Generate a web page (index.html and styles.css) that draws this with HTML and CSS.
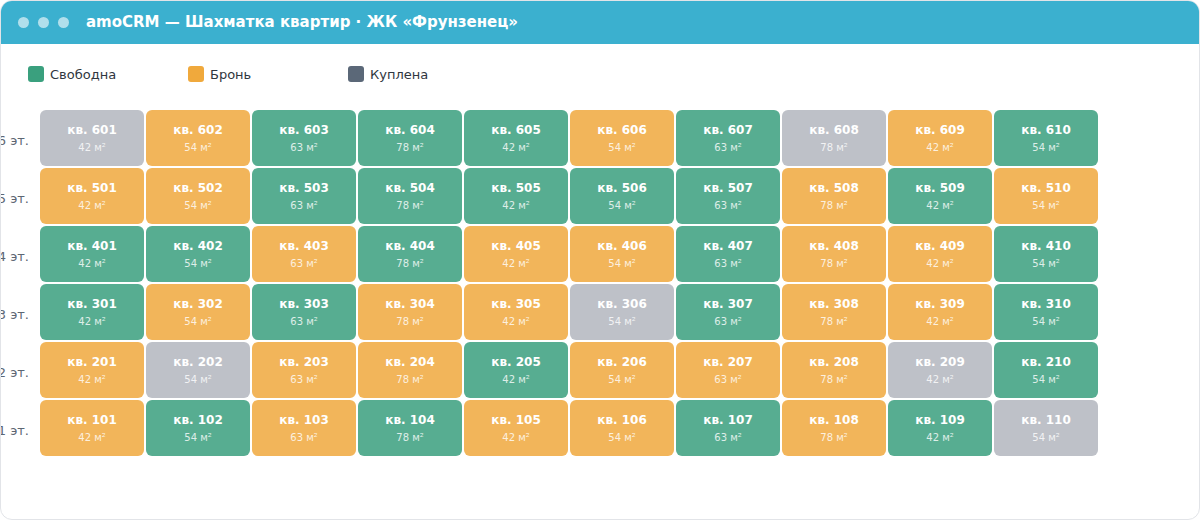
FILE: index.html
```html
<!DOCTYPE html>
<html>
<head>
    <meta charset="utf-8">
    <title>amoCRM — Шахматка квартир</title>
    <link rel="stylesheet" href="styles.css">
</head>
<body>
<div class="window">
    <div class="titlebar">
        <span class="dot"></span><span class="dot"></span><span class="dot"></span>
        <span class="title">amoCRM — Шахматка квартир · ЖК «Фрунзенец»</span>
    </div>

    <div class="legend">
        <div class="legend-item"><span class="swatch free"></span>Свободна</div>
        <div class="legend-item"><span class="swatch booked"></span>Бронь</div>
        <div class="legend-item"><span class="swatch sold"></span>Куплена</div>
    </div>

    <div class="board">
        <div class="floor">
            <div class="floor-label">6 эт.</div>
            <div class="flat sold"><b>кв. 601</b><span>42 м²</span></div>
            <div class="flat booked"><b>кв. 602</b><span>54 м²</span></div>
            <div class="flat free"><b>кв. 603</b><span>63 м²</span></div>
            <div class="flat free"><b>кв. 604</b><span>78 м²</span></div>
            <div class="flat free"><b>кв. 605</b><span>42 м²</span></div>
            <div class="flat booked"><b>кв. 606</b><span>54 м²</span></div>
            <div class="flat free"><b>кв. 607</b><span>63 м²</span></div>
            <div class="flat sold"><b>кв. 608</b><span>78 м²</span></div>
            <div class="flat booked"><b>кв. 609</b><span>42 м²</span></div>
            <div class="flat free"><b>кв. 610</b><span>54 м²</span></div>
        </div>
        <div class="floor">
            <div class="floor-label">5 эт.</div>
            <div class="flat booked"><b>кв. 501</b><span>42 м²</span></div>
            <div class="flat booked"><b>кв. 502</b><span>54 м²</span></div>
            <div class="flat free"><b>кв. 503</b><span>63 м²</span></div>
            <div class="flat free"><b>кв. 504</b><span>78 м²</span></div>
            <div class="flat free"><b>кв. 505</b><span>42 м²</span></div>
            <div class="flat free"><b>кв. 506</b><span>54 м²</span></div>
            <div class="flat free"><b>кв. 507</b><span>63 м²</span></div>
            <div class="flat booked"><b>кв. 508</b><span>78 м²</span></div>
            <div class="flat free"><b>кв. 509</b><span>42 м²</span></div>
            <div class="flat booked"><b>кв. 510</b><span>54 м²</span></div>
        </div>
        <div class="floor">
            <div class="floor-label">4 эт.</div>
            <div class="flat free"><b>кв. 401</b><span>42 м²</span></div>
            <div class="flat free"><b>кв. 402</b><span>54 м²</span></div>
            <div class="flat booked"><b>кв. 403</b><span>63 м²</span></div>
            <div class="flat free"><b>кв. 404</b><span>78 м²</span></div>
            <div class="flat booked"><b>кв. 405</b><span>42 м²</span></div>
            <div class="flat booked"><b>кв. 406</b><span>54 м²</span></div>
            <div class="flat free"><b>кв. 407</b><span>63 м²</span></div>
            <div class="flat booked"><b>кв. 408</b><span>78 м²</span></div>
            <div class="flat booked"><b>кв. 409</b><span>42 м²</span></div>
            <div class="flat free"><b>кв. 410</b><span>54 м²</span></div>
        </div>
        <div class="floor">
            <div class="floor-label">3 эт.</div>
            <div class="flat free"><b>кв. 301</b><span>42 м²</span></div>
            <div class="flat booked"><b>кв. 302</b><span>54 м²</span></div>
            <div class="flat free"><b>кв. 303</b><span>63 м²</span></div>
            <div class="flat booked"><b>кв. 304</b><span>78 м²</span></div>
            <div class="flat booked"><b>кв. 305</b><span>42 м²</span></div>
            <div class="flat sold"><b>кв. 306</b><span>54 м²</span></div>
            <div class="flat free"><b>кв. 307</b><span>63 м²</span></div>
            <div class="flat booked"><b>кв. 308</b><span>78 м²</span></div>
            <div class="flat booked"><b>кв. 309</b><span>42 м²</span></div>
            <div class="flat free"><b>кв. 310</b><span>54 м²</span></div>
        </div>
        <div class="floor">
            <div class="floor-label">2 эт.</div>
            <div class="flat booked"><b>кв. 201</b><span>42 м²</span></div>
            <div class="flat sold"><b>кв. 202</b><span>54 м²</span></div>
            <div class="flat booked"><b>кв. 203</b><span>63 м²</span></div>
            <div class="flat booked"><b>кв. 204</b><span>78 м²</span></div>
            <div class="flat free"><b>кв. 205</b><span>42 м²</span></div>
            <div class="flat booked"><b>кв. 206</b><span>54 м²</span></div>
            <div class="flat booked"><b>кв. 207</b><span>63 м²</span></div>
            <div class="flat booked"><b>кв. 208</b><span>78 м²</span></div>
            <div class="flat sold"><b>кв. 209</b><span>42 м²</span></div>
            <div class="flat free"><b>кв. 210</b><span>54 м²</span></div>
        </div>
        <div class="floor">
            <div class="floor-label">1 эт.</div>
            <div class="flat booked"><b>кв. 101</b><span>42 м²</span></div>
            <div class="flat free"><b>кв. 102</b><span>54 м²</span></div>
            <div class="flat booked"><b>кв. 103</b><span>63 м²</span></div>
            <div class="flat free"><b>кв. 104</b><span>78 м²</span></div>
            <div class="flat booked"><b>кв. 105</b><span>42 м²</span></div>
            <div class="flat booked"><b>кв. 106</b><span>54 м²</span></div>
            <div class="flat free"><b>кв. 107</b><span>63 м²</span></div>
            <div class="flat booked"><b>кв. 108</b><span>78 м²</span></div>
            <div class="flat free"><b>кв. 109</b><span>42 м²</span></div>
            <div class="flat sold"><b>кв. 110</b><span>54 м²</span></div>
        </div>
    </div>
</div>
</body>
</html>
```

FILE: styles.css
```css
body {
    margin: 0;
    background: #fff;
    font-family: 'DejaVu Sans', sans-serif;
}

.window {
    height: 520px;
    box-sizing: border-box;
    border: 1px solid #e2e4e8;
    border-radius: 12px;
    overflow: hidden;
    background: #fff;
}

.titlebar {
    height: 44px;
    background: #3bb0cf;
    display: flex;
    align-items: center;
    padding-left: 18px;
    margin: -1px -1px 0;
}

.dot {
    width: 11px;
    height: 11px;
    border-radius: 50%;
    background: rgba(255, 255, 255, 0.6);
    margin-right: 9px;
}

.title {
    margin-left: 8px;
    color: #fff;
    font-weight: bold;
    font-size: 15px;
}

.legend {
    display: flex;
    padding: 22px 0 0 27px;
    height: 16px;
}

.legend-item {
    width: 160px;
    display: flex;
    align-items: center;
    font-size: 13px;
    color: #2f3640;
}

.swatch {
    width: 16px;
    height: 16px;
    border-radius: 3px;
    margin-right: 6px;
}

.swatch.free { background: #3aa07e; }
.swatch.booked { background: #f0a93c; }
.swatch.sold { background: #5b6878; }

.board {
    padding-top: 28px;
    display: flex;
    flex-direction: column;
    gap: 2px;
}

.floor {
    display: flex;
    gap: 2px;
    height: 56px;
}

.floor-label {
    width: 28px;
    margin-right: 9px;
    padding-top: 4px;
    display: flex;
    align-items: center;
    justify-content: flex-end;
    white-space: nowrap;
    font-size: 13px;
    color: #5d6673;
}

.flat {
    width: 104px;
    border-radius: 6px;
    display: flex;
    flex-direction: column;
    align-items: center;
    justify-content: center;
    color: #fff;
}

.flat b {
    font-size: 12px;
    line-height: 16px;
}

.flat span {
    font-size: 10px;
    line-height: 14px;
    margin-top: 3px;
    opacity: 0.8;
}

.flat.free { background: #57ad91; }
.flat.booked { background: #f2b55a; }
.flat.sold { background: #bec1c8; }
```
